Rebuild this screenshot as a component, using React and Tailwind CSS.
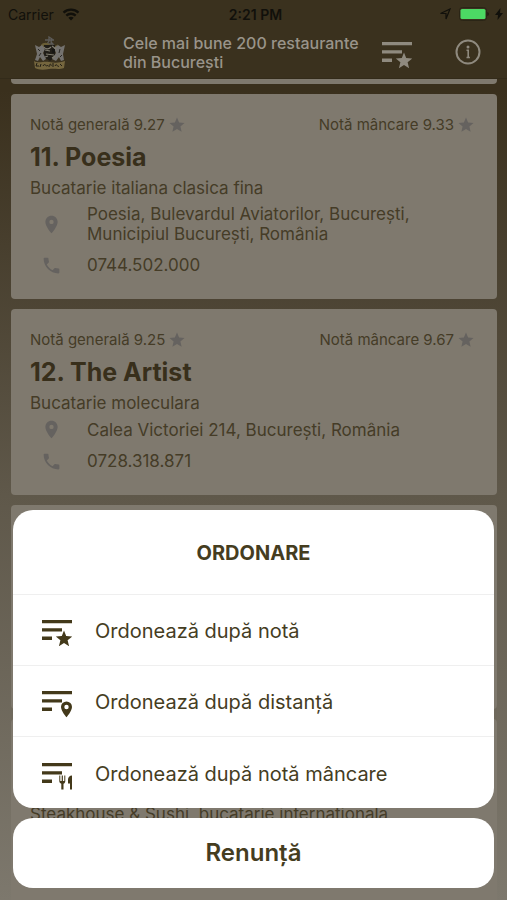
import React, { useState } from 'react';
import { MdPlace, MdPhone, MdStar } from 'react-icons/md';

const restaurants = [
  {
    id: 11,
    name: 'Poesia',
    general: '9.27',
    food: '9.33',
    cuisine: 'Bucatarie italiana clasica fina',
    address: 'Poesia, Bulevardul Aviatorilor, București, Municipiul București, România',
    phone: '0744.502.000',
  },
  {
    id: 12,
    name: 'The Artist',
    general: '9.25',
    food: '9.67',
    cuisine: 'Bucatarie moleculara',
    address: 'Calea Victoriei 214, București, România',
    phone: '0728.318.871',
  },
];

const sortOptions = [
  { id: 'star', label: 'Ordonează după notă' },
  { id: 'pin', label: 'Ordonează după distanță' },
  { id: 'food', label: 'Ordonează după notă mâncare' },
];

const SortIcon = ({ type, className }) => (
  <svg viewBox="0 0 30 28" className={className} fill="currentColor" aria-hidden="true">
    <path d="M0 1h30v3.300H0zM0 9.300h20v3.300H0zM0 17.600h10v3.300H0z" />
    {type === 'star' && (
      <path d="M22 11.500l2.200 5.600 6 .4-4.600 3.800 1.500 5.900-5.100-3.200-5.100 3.200 1.500-5.900-4.600-3.800 6-.4z" />
    )}
    {type === 'pin' && (
      <path
        fillRule="evenodd"
        d="M24.500 11.500a5.500 5.500 0 0 0-5.500 5.500c0 4 5.500 10.300 5.500 10.300S30 21 30 17a5.500 5.500 0 0 0-5.500-5.500zm0 3.300a2.200 2.200 0 1 1 0 4.400 2.200 2.200 0 0 1 0-4.400z"
      />
    )}
    {type === 'food' && (
      <path d="M17.300 13.500h1V19h1.400v-5.500h1.200V19h1.400v-5.500h1V19c0 1.600-.8 2.400-1.800 2.700v5.800h-2.200v-5.800c-1.200-.3-2-1.200-2-2.700zM30 13.500v14h-2v-6h-2v-4c0-2.200 1.600-4 4-4z" />
    )}
  </svg>
);

const Logo = () => (
  <svg viewBox="0 0 34 34" className="h-[34px] w-[34px]" fill="none" aria-hidden="true">
    <path d="M16 1l3 2-1 3 2 2h-6l2-3zM12 4h9" stroke="#5d5c5a" strokeWidth="1.300" />
    <path d="M8 9c2-3 7-3 9 0s6 1 8-1l-3 6H9z" fill="#695d35" />
    <path d="M11 9h11v12l-5 4-6-4z" fill="#201d17" />
    <path d="M2 9l4 2 3-2 3 4-2 4 3 6-3 2-3-4-2 4-3-1 2-6z" fill="#74726f" />
    <path d="M32 9l-4 2-3-2-4 3 2 5-4 6 4 2 3-4 2 4 3-1-1-6z" fill="#74726f" />
    <path d="M5 13l2 2M8 17l-2 3M27 13l-1 4M29 19l-2 2" stroke="#292724" />
    <path d="M11 11c2 3 5 2 7 0M12 14l5 1M19 10l4 3M13 18l8 1M12 21l3-1M19 22l3-2" stroke="#817d70" strokeWidth="1.200" />
    <path d="M19 13h3v4h-3z" fill="#171613" />
    <path d="M1 25c5 3 9 0 15 1s10 1 16-1l-1 7c-6 2-9 0-15 1s-10 1-14-1z" fill="#75663e" />
    <path d="M4 27l-1 3h3M8 28l-1 3M10 30c2-4 3 2 5-1M16 31c0-4 3-3 2-1M20 27v4M22 30c2-4 2 2 4 0M27 28l2 2" stroke="#211d14" />
  </svg>
);

const StatusBar = () => (
  <div className="grid h-7 grid-cols-3 items-center pl-2 pr-1 text-[14px] text-[#11100b]">
    <div className="flex items-center gap-2">
      <span>Carrier</span>
      <svg viewBox="0 0 18 13" className="h-[13px] w-[18px]" fill="none" stroke="currentColor" strokeWidth="2.300" aria-hidden="true">
        <path d="M1.500 4.600c4.200-4 10.800-4 15 0M4.300 7.600c2.600-2.500 6.800-2.500 9.400 0" />
        <path d="M9 12.500L6.300 9.700c1.500-1.300 3.900-1.300 5.400 0z" fill="currentColor" stroke="none" />
      </svg>
    </div>
    <span className="text-center font-semibold">2:21 PM</span>
    <div className="flex items-center justify-end">
      <svg viewBox="0 0 12 12" className="mr-2 h-3 w-3" fill="none" stroke="currentColor" strokeWidth="1.200" aria-hidden="true">
        <path d="M11 1L7 11V5.500H1.500z" />
      </svg>
      <svg viewBox="0 0 30 14" className="h-[14px] w-[30px]" aria-hidden="true">
        <rect x=".5" y=".5" width="27" height="13" rx="3" fill="none" stroke="#2a2516" />
        <rect x="1.500" y="2" width="25" height="10" rx="1.500" fill="#4cd964" />
        <path d="M28.500 5v4c1.500-.6 1.500-3.400 0-4z" fill="#11100b" />
      </svg>
      <svg viewBox="0 0 8 12" className="ml-1.5 h-3 w-2" fill="currentColor" aria-hidden="true">
        <path d="M5.500 0L0 7h3L2.500 12 8 5H5z" />
      </svg>
    </div>
  </div>
);

const Header = ({ onSort }) => (
  <header className="border-b border-[#332b1a] bg-[#3a311e]">
    <StatusBar />
    <div className="flex h-[50px] items-center pl-[33px] pr-[26px]">
      <Logo />
      <h1 className="ml-14 flex-1 text-[16px] font-medium text-[#99948a]">
        <span className="block leading-[19px]">Cele mai bune 200 restaurante</span>
        <span className="block leading-[19px]">din București</span>
      </h1>
      <button type="button" onClick={onSort} aria-label="Ordonare" className="pt-1 text-[#8f8a7f]">
        <SortIcon type="star" className="h-7 w-[30px]" />
      </button>
      <button type="button" aria-label="Informații" className="ml-[43px] pb-0.5 text-[#8f8a7f]">
        <svg viewBox="0 0 26 26" className="h-[26px] w-[26px]" fill="none" stroke="currentColor" strokeWidth="2" aria-hidden="true">
          <circle cx="13" cy="13" r="11.500" />
          <path d="M11.500 11.300h1.700V18.300M11.500 18.500h3.400" strokeWidth="1.600" />
          <circle cx="13" cy="8" r="1.500" fill="currentColor" stroke="none" />
        </svg>
      </button>
    </div>
  </header>
);

const Rating = ({ label, value }) => (
  <span className="flex items-center gap-[3px]">
    {label} {value}
    <MdStar className="h-[18px] w-[18px] text-[#65625f]" />
  </span>
);

const RestaurantCard = ({ restaurant }) => (
  <article className="rounded bg-[#7f796e] pb-6 pl-[19px] pr-[22px] pt-[21px] text-[#453c27]">
    <div className="flex h-5 items-center justify-between text-[15px]">
      <Rating label="Notă generală" value={restaurant.general} />
      <Rating label="Notă mâncare" value={restaurant.food} />
    </div>
    <h2 className="mt-1.5 text-[25px] font-bold leading-8 text-[#382f1b]">
      {restaurant.id}. {restaurant.name}
    </h2>
    <p className="mt-[5px] text-[17px] leading-5">{restaurant.cuisine}</p>
    <div className="mt-1.5 flex items-center text-[17px] leading-5">
      <MdPlace className="ml-[11px] mr-[25px] h-[21px] w-[21px] shrink-0 text-[#65625f]" />
      <address className="max-w-[350px] not-italic">{restaurant.address}</address>
    </div>
    <div className="mt-[11px] flex h-5 items-center text-[17px] leading-5">
      <MdPhone className="ml-[11px] mr-[25px] h-[21px] w-[21px] shrink-0 text-[#65625f]" />
      <a href={`tel:${restaurant.phone}`}>{restaurant.phone}</a>
    </div>
  </article>
);

const SortSheet = ({ onClose }) => (
  <div role="dialog" aria-label="Ordonare" className="absolute inset-x-0 bottom-0 px-[13px] pb-3 text-[#453d1f]">
    <div className="divide-y divide-[#efefef] overflow-hidden rounded-[20px] bg-white">
      <h2 className="pb-[26px] pt-[29px] text-center text-[20px] font-bold leading-[29px]">ORDONARE</h2>
      {sortOptions.map((option) => (
        <button
          key={option.id}
          type="button"
          onClick={onClose}
          className="flex h-[71px] w-full items-center gap-[23px] pl-[29px] pt-0.5 text-left text-[20px]"
        >
          <SortIcon type={option.id} className="mt-1 h-7 w-[30px] text-[#43391a]" />
          {option.label}
        </button>
      ))}
    </div>
    <button
      type="button"
      onClick={onClose}
      className="mt-2.5 h-[70px] w-full rounded-[20px] bg-white text-[24px] font-semibold"
    >
      Renunță
    </button>
  </div>
);

const App = () => {
  const [sheetOpen, setSheetOpen] = useState(true);

  return (
    <div className="relative h-screen overflow-hidden bg-linear-to-b from-[#3a301d] from-10% via-[#5f584a] via-55% to-[#7d786d] font-['Inter','Liberation_Sans',sans-serif]">
      <Header onSort={() => setSheetOpen(true)} />
      <main className="flex flex-col gap-2.5 pl-[11px] pr-2.5">
        <div className="h-[5px] rounded-b bg-[#7f796e]" />
        {restaurants.map((restaurant) => (
          <RestaurantCard key={restaurant.id} restaurant={restaurant} />
        ))}
        <div className="h-[204px] rounded bg-[#7f796e]" />
        <article className="h-[205px] rounded bg-[#7f796e] px-[19px] pt-[85px] text-[#453c27]">
          <p className="text-[17px] leading-5">Steakhouse & Sushi, bucatarie internationala</p>
        </article>
      </main>
      {sheetOpen && <SortSheet onClose={() => setSheetOpen(false)} />}
    </div>
  );
};

export default App;
